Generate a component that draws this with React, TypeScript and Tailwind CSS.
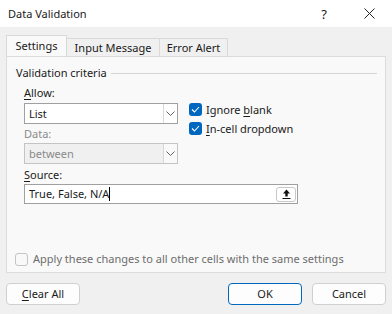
import React from 'react';

function Chevron() {
  return (
    <svg width="9" height="5" viewBox="0 0 9 5" className="text-[#606060]">
      <path d="M0.5 0.5 L4.5 4.5 L8.5 0.5" fill="none" stroke="currentColor" strokeWidth="1" />
    </svg>
  );
}

function Check() {
  return (
    <span className="w-[13px] h-[13px] rounded-[3px] bg-[#0067c0] flex items-center justify-center">
      <svg width="9" height="7" viewBox="0 0 9 7">
        <path d="M1 3.5 L3.5 6 L8 1" fill="none" stroke="white" strokeWidth="1.1" />
      </svg>
    </span>
  );
}

function Btn({ children, primary }: { children: React.ReactNode; primary?: boolean }) {
  return (
    <div
      className={
        'w-[74px] h-[22px] bg-[#fdfdfd] rounded-[4px] flex items-center justify-center border ' +
        (primary ? 'border-[#0067c0]' : 'border-[#d0d0d0]')
      }
    >
      {children}
    </div>
  );
}

export default function App() {
  return (
    <div className="w-[392px] h-[314px] bg-[#f0f0f0] text-[11px] leading-[16px] text-[#1a1a1a] font-['Noto_Sans','Liberation_Sans',sans-serif] overflow-hidden">
      {/* title bar */}
      <div className="h-[27px] bg-white flex items-center pl-[8px]">
        <span>Data Validation</span>
        <span className="ml-auto mr-[37px] text-[13px]">?</span>
        <svg width="11" height="11" viewBox="0 0 11 11" className="mr-[17px]">
          <path d="M0.5 0.5 L10.5 10.5 M10.5 0.5 L0.5 10.5" stroke="#222" strokeWidth="1" />
        </svg>
      </div>

      {/* tabs */}
      <div className="flex items-end pl-[6px] pt-[8px] h-[29px] relative z-10">
        <div className="w-[61px] h-[21px] bg-[#f9f9f9] border border-b-0 border-[#d9d9d9] flex items-center justify-center">
          Settings
        </div>
        <div className="w-[93px] h-[19px] mb-[-1px] border border-l-0 border-[#d9d9d9] flex items-center justify-center">
          Input Message
        </div>
        <div className="w-[68px] h-[19px] mb-[-1px] border border-l-0 border-[#d9d9d9] flex items-center justify-center">
          Error Alert
        </div>
      </div>

      {/* panel */}
      <div className="mx-[6px] h-[217px] bg-[#f9f9f9] border border-[#dcdcdc] relative">
        <div className="flex items-center mt-[8px] ml-[9px] mr-[8px]">
          <span>Validation criteria</span>
          <div className="flex-1 h-px bg-[#d4d4d4] ml-[4px]" />
        </div>

        <div className="flex ml-[17px] mt-[4px]">
          <div className="w-[154px]">
            <div className="h-[16px]">
              <span className="underline underline-offset-2">A</span>llow:
            </div>
            <div className="mt-[2px] h-[21px] bg-white border border-[#a0a0a0] flex items-center">
              <span className="pl-[4px] flex-1">List</span>
              <div className="w-[14px] h-[19px] border-l border-[#d8d8d8] flex items-center justify-center">
                <Chevron />
              </div>
            </div>
            <div className="h-[16px] mt-[2px] text-[#8a8a8a]">Data:</div>
            <div className="mt-[1px] h-[21px] bg-[#f0f0f0] border border-[#c4c4c4] flex items-center text-[#8a8a8a]">
              <span className="pl-[4px] flex-1">between</span>
              <div className="w-[14px] h-[19px] bg-[#f9f9f9] border-l border-[#d8d8d8] flex items-center justify-center">
                <Chevron />
              </div>
            </div>
          </div>
          <div className="ml-[11px] mt-[18px] flex flex-col gap-[6px]">
            <div className="flex items-center gap-[4px] h-[13px]">
              <Check />
              <span>
                Ignore <span className="underline underline-offset-2">b</span>lank
              </span>
            </div>
            <div className="flex items-center gap-[4px] h-[13px]">
              <Check />
              <span>
                <span className="underline underline-offset-2">I</span>n-cell dropdown
              </span>
            </div>
          </div>
        </div>

        <div className="ml-[17px] mt-[3px] h-[16px]">
          <span className="underline underline-offset-2">S</span>ource:
        </div>
        <div className="ml-[17px] mt-[1px] w-[274px] h-[20px] bg-white border border-[#a0a0a0] flex items-center">
          <span className="pl-[4px]">True, False, N/A</span>
          <span className="w-px h-[14px] bg-black" />
          <div className="ml-auto mr-[1px] w-[20px] h-[15px] border border-[#c8c8c8] rounded-[3px] bg-white flex items-center justify-center">
            <svg width="9" height="10" viewBox="0 0 9 10">
              <path d="M4.5 0.5 L1 4.5 L3.3 4.5 L3.3 7.5 L5.7 7.5 L5.7 4.5 L8 4.5 Z" fill="#111" />
              <path d="M0.5 9.5 L8.5 9.5" stroke="#111" strokeWidth="1" />
            </svg>
          </div>
        </div>

        <div className="absolute left-[8px] top-[194px] flex items-center gap-[5px] text-[#6d6d6d]">
          <span className="w-[13px] h-[13px] rounded-[3px] border border-[#c4c4c4] bg-[#f9f9f9]" />
          <span>Apply these changes to all other cells with the same settings</span>
        </div>
      </div>

      {/* buttons */}
      <div className="flex mt-[10px] px-[6px]">
        <Btn>
          <span>
            <span className="underline underline-offset-2">C</span>lear All
          </span>
        </Btn>
        <div className="ml-auto flex gap-[10px]">
          <Btn primary>OK</Btn>
          <Btn>Cancel</Btn>
        </div>
      </div>
    </div>
  );
}
